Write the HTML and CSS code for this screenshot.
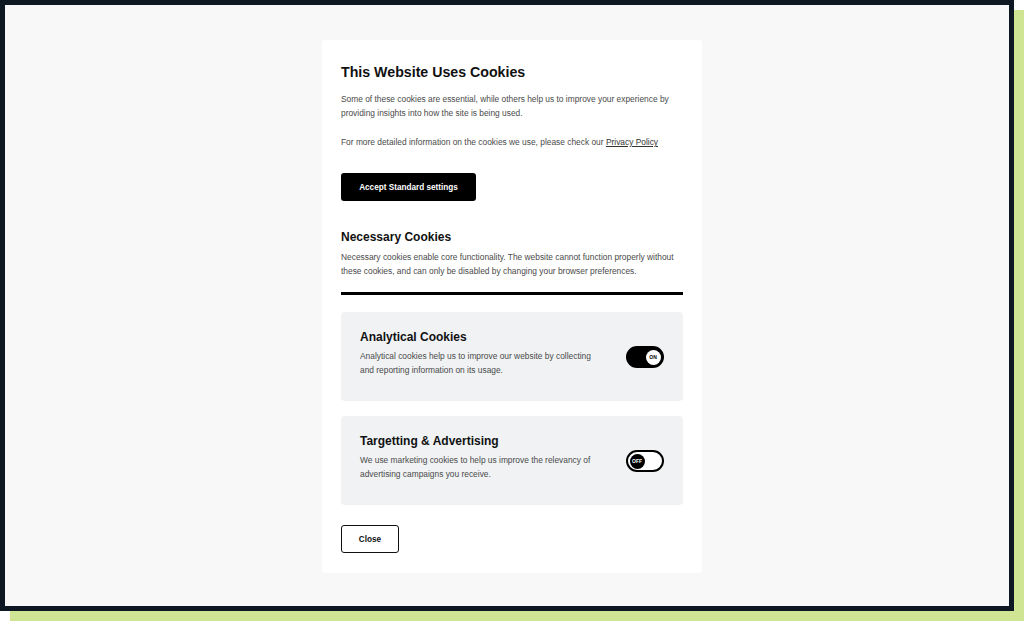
FILE: index.html
```html
<!DOCTYPE html>
<html>
<head>
<meta charset="utf-8">
<link rel="stylesheet" href="styles.css">
</head>
<body>
<div class="frame">
  <div class="modal">
    <h1 class="title">This Website Uses Cookies</h1>
    <p class="text">Some of these cookies are essential, while others help us to improve your experience by providing insights into how the site is being used.</p>
    <p class="text para2">For more detailed information on the cookies we use, please check our <a class="link" href="#">Privacy Policy</a></p>
    <button class="btn-accept">Accept Standard settings</button>
    <h2 class="subtitle">Necessary Cookies</h2>
    <p class="text">Necessary cookies enable core functionality. The website cannot function properly without these cookies, and can only be disabled by changing your browser preferences.</p>
    <div class="rule"></div>
    <div class="card">
      <div class="card-body">
        <h3 class="card-title">Analytical Cookies</h3>
        <p class="text">Analytical cookies help us to improve our website by collecting and reporting information on its usage.</p>
      </div>
      <div class="toggle on"><span class="knob">ON</span></div>
    </div>
    <div class="card">
      <div class="card-body">
        <h3 class="card-title">Targetting &amp; Advertising</h3>
        <p class="text">We use marketing cookies to help us improve the relevancy of advertising campaigns you receive.</p>
      </div>
      <div class="toggle off"><span class="knob">OFF</span></div>
    </div>
    <button class="btn-close">Close</button>
  </div>
</div>
</body>
</html>
```
FILE: styles.css
```css
* { box-sizing: border-box; }
html, body { margin: 0; padding: 0; background: #ffffff; }
body { font-family: "Liberation Sans", Arial, sans-serif; width: 1024px; height: 621px; overflow: hidden; }
.frame {
  width: 1014px;
  height: 611px;
  border: 5px solid #0e1822;
  background: #f8f8f8;
  box-shadow: 10px 10px 0 #cfe593;
  display: flex;
  justify-content: center;
  align-items: flex-start;
  padding: 35px 0 0 10px;
}
.modal {
  width: 380px;
  background: #ffffff;
  border-radius: 4px;
  padding: 23px 19px 20px 19px;
  display: flex;
  flex-direction: column;
  align-items: flex-start;
}
.title {
  margin: 0 0 11px 0;
  font-size: 14.2px;
  line-height: 18px;
  font-weight: bold;
  color: #111;
}
.text {
  margin: 0;
  font-size: 8.4px;
  line-height: 14px;
  color: #4a4a4a;
}
.para2 { margin-top: 15px; }
.link { color: #333; text-decoration: underline; }
.btn-accept {
  margin-top: 24px;
  width: 135px;
  height: 28px;
  background: #000;
  color: #fff;
  border: none;
  border-radius: 3px;
  font-family: inherit;
  font-weight: bold;
  font-size: 8.2px;
  padding: 0;
}
.subtitle {
  margin: 28px 0 5px 0;
  font-size: 12px;
  line-height: 16px;
  font-weight: bold;
  color: #111;
}
.rule {
  align-self: stretch;
  height: 3px;
  background: #000;
  margin: 14px 0 17px 0;
}
.card {
  align-self: stretch;
  height: 89px;
  background: #f0f2f4;
  border-radius: 4px;
  padding: 17px 19px 0 19px;
  display: flex;
  align-items: flex-start;
  justify-content: space-between;
  margin-bottom: 15px;
}
.card-title {
  margin: 0 0 4px 0;
  font-size: 12px;
  line-height: 16px;
  font-weight: bold;
  color: #111;
}
.card-body { width: 240px; }
.toggle {
  width: 38px;
  height: 22px;
  border: 2.5px solid #000;
  border-radius: 12px;
  margin-top: 17px;
  display: flex;
  align-items: center;
  padding: 0 1.5px;
}
.toggle.on { background: #000; justify-content: flex-end; }
.toggle.off { background: #fff; justify-content: flex-start; }
.knob {
  width: 15px;
  height: 15px;
  border-radius: 50%;
  display: flex;
  align-items: center;
  justify-content: center;
  font-size: 5px;
  font-weight: bold;
  line-height: 1;
}
.toggle.on .knob { background: #fff; color: #000; }
.toggle.off .knob { background: #000; color: #fff; }
.btn-close {
  margin-top: 5px;
  width: 58px;
  height: 28px;
  background: #fff;
  color: #111;
  border: 1.5px solid #111;
  border-radius: 3px;
  font-family: inherit;
  font-weight: bold;
  font-size: 8.2px;
  padding: 0;
}
```
